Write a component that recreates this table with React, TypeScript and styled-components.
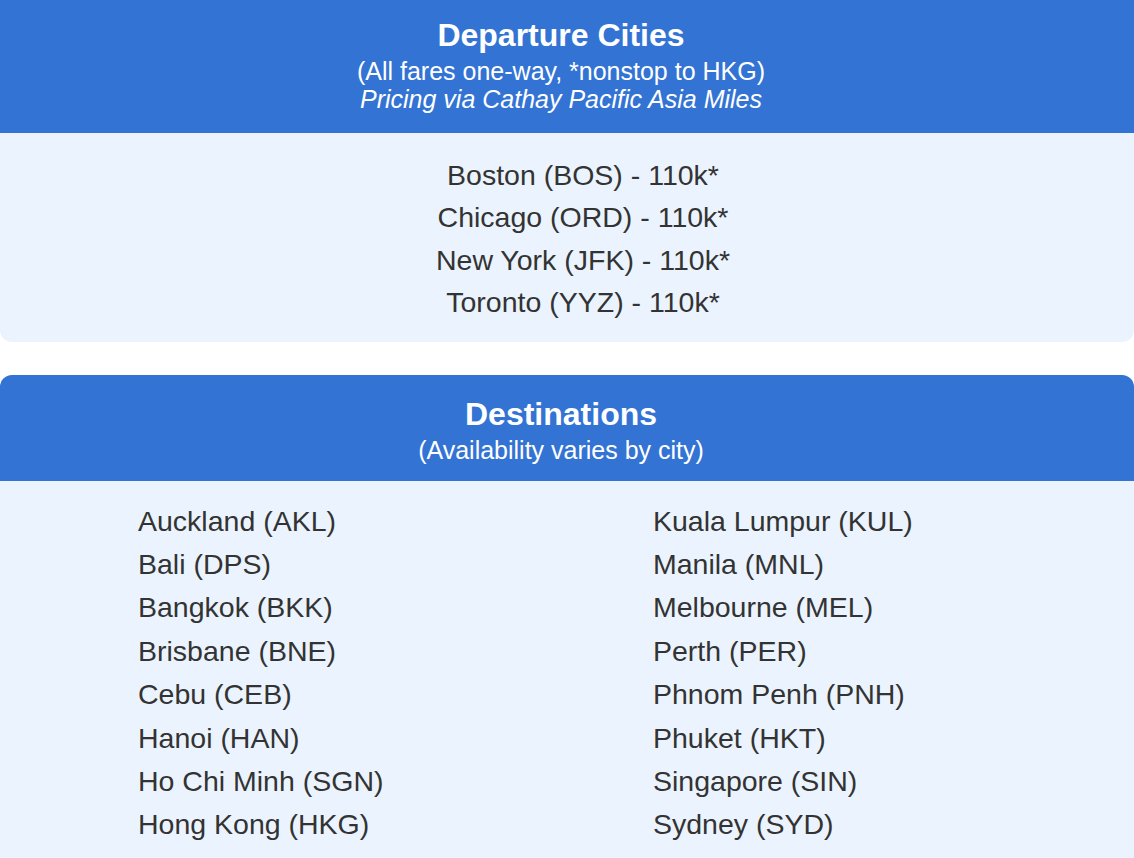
import React from 'react';
import styled, { createGlobalStyle } from 'styled-components';

const departures = [
  'Boston (BOS) - 110k*',
  'Chicago (ORD) - 110k*',
  'New York (JFK) - 110k*',
  'Toronto (YYZ) - 110k*',
];

const destinations = [
  [
    'Auckland (AKL)',
    'Bali (DPS)',
    'Bangkok (BKK)',
    'Brisbane (BNE)',
    'Cebu (CEB)',
    'Hanoi (HAN)',
    'Ho Chi Minh (SGN)',
    'Hong Kong (HKG)',
  ],
  [
    'Kuala Lumpur (KUL)',
    'Manila (MNL)',
    'Melbourne (MEL)',
    'Perth (PER)',
    'Phnom Penh (PNH)',
    'Phuket (HKT)',
    'Singapore (SIN)',
    'Sydney (SYD)',
  ],
];

function App() {
  return (
    <>
      <GlobalStyle />
      <Page>
        <Card $cutTop>
          <Header $top={17} $bottom={20}>
            <Title>Departure Cities</Title>
            <Sub>(All fares one-way, *nonstop to HKG)</Sub>
            <Sub $italic>Pricing via Cathay Pacific Asia Miles</Sub>
          </Header>
          <CenterList>
            {departures.map((d) => (
              <Item key={d} $lh={42.4}>
                {d}
              </Item>
            ))}
          </CenterList>
        </Card>

        <Card>
          <Header $top={21} $bottom={17}>
            <Title>Destinations</Title>
            <Sub>(Availability varies by city)</Sub>
          </Header>
          <Columns>
            {destinations.map((col, i) => (
              <Column key={i}>
                {col.map((d) => (
                  <Item key={d}>{d}</Item>
                ))}
              </Column>
            ))}
          </Columns>
        </Card>
      </Page>
    </>
  );
}

export default App;

const GlobalStyle = createGlobalStyle`
  body {
    margin: 0;
    background: #ffffff;
    font-family: "Liberation Sans", Arial, Helvetica, sans-serif;
  }
`;

const Page = styled.div`
  display: flex;
  flex-direction: column;
  gap: 33px;
`;

const Card = styled.section<{ $cutTop?: boolean }>`
  background: #ebf4fe;
  border-radius: ${(p) => (p.$cutTop ? '0 0 12px 12px' : '12px')};
  overflow: hidden;
`;

const Header = styled.header<{ $top: number; $bottom: number }>`
  background: #3273d4;
  color: #ffffff;
  text-align: center;
  padding: ${(p) => p.$top}px 12px ${(p) => p.$bottom}px 0;
  display: flex;
  flex-direction: column;
`;

const Title = styled.h2`
  margin: 0 0 4px;
  font-size: 32px;
  line-height: 36px;
  font-weight: 700;
`;

const Sub = styled.div<{ $italic?: boolean }>`
  font-size: 25px;
  line-height: 28px;
  font-style: ${(p) => (p.$italic ? 'italic' : 'normal')};
`;

const CenterList = styled.div`
  display: flex;
  flex-direction: column;
  align-items: center;
  padding: 21px 0 18px 32px;
`;

const Item = styled.div<{ $lh?: number }>`
  font-size: 28.5px;
  line-height: ${(p) => p.$lh ?? 43.4}px;
  color: #333333;
`;

const Columns = styled.div`
  display: grid;
  grid-template-columns: 515px 1fr;
  padding: 19px 0 32px 138px;
`;

const Column = styled.div`
  display: flex;
  flex-direction: column;
`;
